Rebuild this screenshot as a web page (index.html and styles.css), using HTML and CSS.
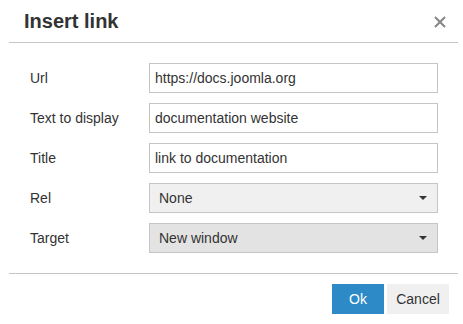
FILE: index.html
```html
<!DOCTYPE html>
<html lang="en">
  <head>
    <meta charset="UTF-8" />
    <meta name="viewport" content="width=device-width, initial-scale=1.0" />
    <title>Insert link</title>
    <link rel="stylesheet" href="styles.css">
  </head>
  <body>
    <div class="dialog">
      <div class="dialog-head">
        <h1>Insert link</h1>
        <button class="close-btn" aria-label="Close">
          <svg width="12" height="12" viewBox="0 0 12 12">
            <path d="M1 1 L11 11 M11 1 L1 11" stroke="#858585" stroke-width="2" />
          </svg>
        </button>
      </div>

      <form class="dialog-body">
        <div class="form-row">
          <label for="url">Url</label>
          <input type="text" id="url" value="https://docs.joomla.org" />
        </div>
        <div class="form-row">
          <label for="text">Text to display</label>
          <input type="text" id="text" value="documentation website" />
        </div>
        <div class="form-row">
          <label for="title">Title</label>
          <input type="text" id="title" value="link to documentation" />
        </div>
        <div class="form-row">
          <label>Rel</label>
          <div class="select">None<span class="caret"></span></div>
        </div>
        <div class="form-row">
          <label>Target</label>
          <div class="select active">New window<span class="caret"></span></div>
        </div>
      </form>

      <div class="dialog-foot">
        <button class="btn btn-primary">Ok</button>
        <button class="btn btn-cancel">Cancel</button>
      </div>
    </div>
  </body>
</html>
```

FILE: styles.css
```css
* {
  margin: 0;
  padding: 0;
  box-sizing: border-box;
}

body {
  font-family: "Liberation Sans", Arial, sans-serif;
  font-size: 14px;
  color: #333;
  background: #fff;
}

.dialog {
  width: 463px;
}

.dialog-head {
  margin: 0 5px 0 9px;
  height: 43px;
  padding: 0 12px 0 15px;
  border-bottom: 1px solid #c5c5c5;
  display: flex;
  align-items: center;
  justify-content: space-between;
}

h1 {
  font-size: 20px;
  font-weight: bold;
  color: #333;
  padding-top: 1px;
}

.close-btn {
  border: none;
  background: none;
  display: flex;
  padding-top: 1px;
}

.dialog-body {
  padding: 20px 25px 0 30px;
  display: flex;
  flex-direction: column;
  gap: 10px;
}

.form-row {
  display: flex;
  align-items: center;
  height: 30px;
}

.form-row label {
  width: 119px;
  flex-shrink: 0;
}

.form-row input,
.select {
  width: 290px;
  height: 30px;
  border: 1px solid #c5c5c5;
  padding: 0 5px;
  font-family: inherit;
  font-size: 14px;
  color: #333;
  background: #fff;
}

.select {
  display: flex;
  align-items: center;
  justify-content: space-between;
  padding: 0 10px 0 9px;
  background: #f0f0f0;
}

.select.active {
  background: #e3e3e3;
}

.caret {
  width: 0;
  height: 0;
  border-left: 4px solid transparent;
  border-right: 4px solid transparent;
  border-top: 4px solid #333;
}

.dialog-foot {
  margin: 20px 5px 0 9px;
  padding: 10px 9px 0 0;
  border-top: 1px solid #c5c5c5;
  display: flex;
  justify-content: flex-end;
  gap: 3px;
}

.btn {
  height: 30px;
  padding: 0;
  border: none;
  font-family: inherit;
  font-size: 14px;
  color: #333;
  background: #f0f0f0;
}

.btn-primary {
  width: 52px;
  color: #fff;
  background: #2d8ac7;
}

.btn-cancel {
  width: 62px;
}
```
